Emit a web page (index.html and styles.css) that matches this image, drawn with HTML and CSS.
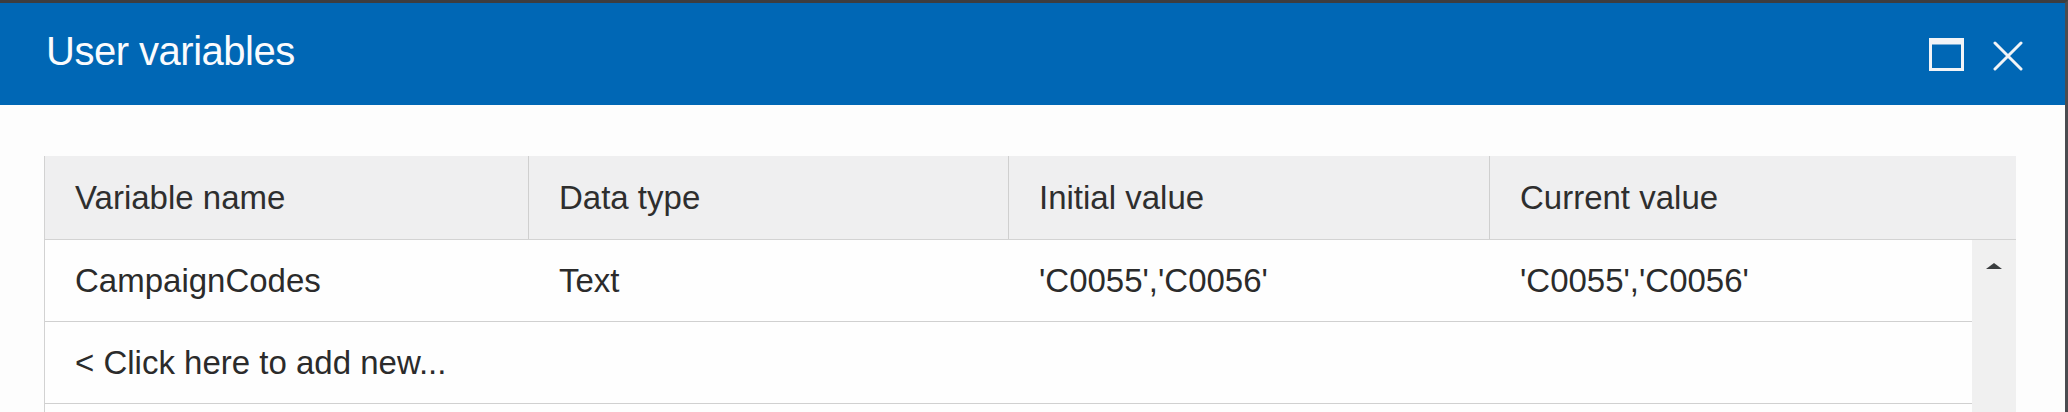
FILE: index.html
```html
<!DOCTYPE html>
<html lang="en">
  <head>
    <meta charset="UTF-8" />
    <meta name="viewport" content="width=device-width, initial-scale=1.0" />
    <title>User variables</title>
    <link rel="stylesheet" href="styles.css">
  </head>
  <body>
    <div class="dialog">
      <div class="dialog-titlebar">
        <span class="dialog-title">User variables</span>
        <div class="dialog-controls">
          <svg class="icon-maximize" width="35" height="33" viewBox="0 0 35 33">
            <rect x="1.5" y="1.5" width="32" height="30" fill="none" stroke="#f2f4f7" stroke-width="3" />
            <rect x="1.5" y="1.5" width="32" height="5" fill="#f2f4f7" />
          </svg>
          <svg class="icon-close" width="30" height="30" viewBox="0 0 30 30">
            <path d="M2 2 L28 28 M28 2 L2 28" stroke="#f2f4f7" stroke-width="3" stroke-linecap="round" />
          </svg>
        </div>
      </div>

      <div class="dialog-body">
        <div class="var-grid">
          <div class="var-grid-head">
            <div class="cell">Variable name</div>
            <div class="cell">Data type</div>
            <div class="cell">Initial value</div>
            <div class="cell">Current value</div>
          </div>
          <div class="var-grid-main">
            <div class="var-grid-rows">
              <div class="var-row">
                <div class="cell">CampaignCodes</div>
                <div class="cell">Text</div>
                <div class="cell">'C0055','C0056'</div>
                <div class="cell">'C0055','C0056'</div>
              </div>
              <div class="var-row add-row">
                <div class="cell">&lt; Click here to add new...</div>
              </div>
              <div class="var-row empty-row"></div>
            </div>
            <div class="scrollbar">
              <span class="scroll-arrow"></span>
            </div>
          </div>
        </div>
      </div>
    </div>
  </body>
</html>
```

FILE: styles.css
```css
body {
  margin: 0;
  background-color: #fdfdfd;
  font-family: "Liberation Sans", Arial, sans-serif;
  overflow: hidden;
}
.dialog {
  box-sizing: border-box;
  height: 412px;
  overflow: hidden;
  border-top: 3px solid #3d3d3f;
  border-right: 3px solid #4b4c50;
  background-color: #fdfdfd;
}
.dialog-titlebar {
  height: 102px;
  background-color: #0067b5;
  display: flex;
  align-items: center;
  justify-content: space-between;
  padding: 0 42px 0 46px;
}
.dialog-title {
  color: #fafbfd;
  font-size: 40px;
  letter-spacing: -0.5px;
  padding-bottom: 6px;
}
.dialog-controls {
  display: flex;
  align-items: center;
  gap: 29px;
}
.icon-close {
  margin-top: 4px;
}
.dialog-body {
  padding: 51px 49px 0 44px;
}
.var-grid {
  border-left: 1px solid #d2d2d2;
}
.var-grid-head {
  display: grid;
  grid-template-columns: 484px 480px 481px 1fr;
  height: 83px;
  background-color: #efeff0;
  border-bottom: 1px solid #d3d3d3;
  color: #2e2e2e;
}
.var-grid-head .cell {
  border-right: 1px solid #cfcfcf;
}
.var-grid-head .cell:last-child {
  border-right: none;
}
.cell {
  display: flex;
  align-items: center;
  padding-left: 30px;
  font-size: 33px;
  white-space: nowrap;
}
.var-grid-main {
  display: flex;
}
.var-grid-rows {
  flex: 1;
}
.var-row {
  display: grid;
  grid-template-columns: 484px 480px 481px 1fr;
  height: 81px;
  border-bottom: 1px solid #d0d0d0;
  background-color: #fefefe;
  color: #2b2b2b;
}
.add-row {
  grid-template-columns: 1fr;
}
.empty-row {
  height: 8px;
  border-bottom: none;
}
.scrollbar {
  width: 44px;
  background-color: #f0f0f0;
  display: flex;
  justify-content: center;
  padding-top: 23px;
  box-sizing: border-box;
}
.scroll-arrow {
  width: 0;
  height: 0;
  border-left: 8px solid transparent;
  border-right: 8px solid transparent;
  border-bottom: 6px solid #3a3d3f;
}
```
